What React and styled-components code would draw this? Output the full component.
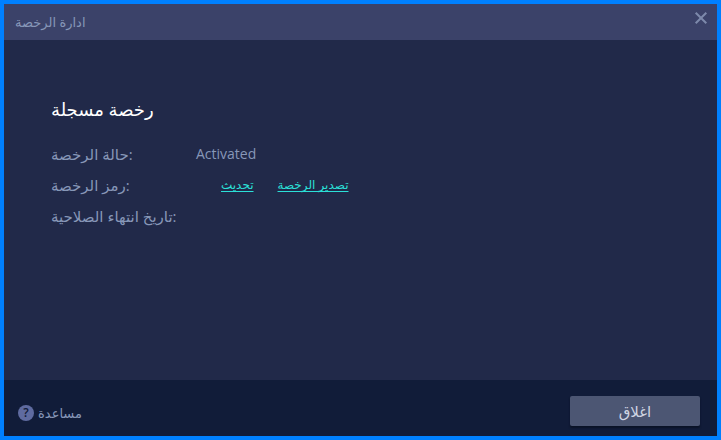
import React from 'react'
import styled, { createGlobalStyle } from 'styled-components'

const GlobalStyle = createGlobalStyle`
  body {
    margin: 0;
    background: #212949;
    font-family: 'Open Sans', 'DejaVu Sans', sans-serif;
  }
`

const Window = styled.div`
  box-sizing: border-box;
  display: flex;
  flex-direction: column;
  min-height: 100vh;
  border: 4px solid #0080ff;
  background: #212949;
  color: #8797b8;
`

const TitleBar = styled.header`
  display: flex;
  align-items: center;
  justify-content: space-between;
  height: 36px;
  padding: 0 8px 0 11px;
  background: #3b4269;
`

const Title = styled.h1`
  margin: 0;
  font-size: 13px;
  font-weight: 400;
  line-height: 20px;
`

const CloseIcon = styled.button`
  display: flex;
  margin: 0 0 8px;
  padding: 0;
  border: 0;
  background: none;
  color: #7d89ab;
  cursor: pointer;
`

const Content = styled.main`
  flex: 1;
  padding: 55px 47px 40px;
`

const Heading = styled.h2`
  margin: 0 0 15px;
  color: #ffffff;
  font-size: 18px;
  font-weight: 400;
  line-height: 28px;
`

const Details = styled.dl`
  display: grid;
  grid-template-columns: 145px 1fr;
  grid-auto-rows: 31px;
  align-items: center;
  margin: 0;
  font-size: 15px;
  line-height: 20px;
`

const Label = styled.dt`
  white-space: nowrap;
`

const Value = styled.dd`
  display: flex;
  gap: 24px;
  margin: 0;
  padding-left: ${props => (props.$indent ? '25px' : '0')};
  font-size: 14px;
`

const Link = styled.a`
  color: #2be0d8;
  font-size: 12px;
  text-underline-offset: 2px;
  text-decoration-skip-ink: none;
`

const Footer = styled.footer`
  display: flex;
  align-items: center;
  justify-content: space-between;
  height: 56px;
  padding: 0 17px 0 14px;
  background: #111c39;
`

const Help = styled.a`
  display: flex;
  align-items: center;
  gap: 4px;
  padding-top: 10px;
  color: inherit;
  font-size: 13px;
  line-height: 20px;
  text-decoration: none;
`

const HelpMark = styled.span`
  width: 16px;
  height: 16px;
  border-radius: 50%;
  background: #5f6ba0;
  color: #111c39;
  font-size: 12px;
  font-weight: 600;
  line-height: 16px;
  text-align: center;
`

const CloseButton = styled.button`
  width: 130px;
  height: 30px;
  margin-top: 6px;
  padding: 0;
  border: 0;
  border-radius: 2px;
  background: #4c5673;
  box-shadow: 0 2px 2px #0a1226;
  color: #d0d5e2;
  font-family: inherit;
  font-size: 15px;
  cursor: pointer;
`

const App = () => (
  <Window>
    <GlobalStyle />
    <TitleBar>
      <Title>ادارة الرخصة</Title>
      <CloseIcon type="button" aria-label="اغلاق">
        <svg width="16" height="16" viewBox="0 0 16 16" fill="none">
          <path d="M2.7 2.7l10.6 10.6M13.3 2.7L2.7 13.3" stroke="currentColor" strokeWidth="2" />
        </svg>
      </CloseIcon>
    </TitleBar>

    <Content>
      <Heading>رخصة مسجلة</Heading>
      <Details>
        <Label>حالة الرخصة:</Label>
        <Value>Activated</Value>
        <Label>رمز الرخصة:</Label>
        <Value $indent>
          <Link href="#update">تحديث</Link>
          <Link href="#export">تصدير الرخصة</Link>
        </Value>
        <Label>تاريخ انتهاء الصلاحية:</Label>
        <Value />
      </Details>
    </Content>

    <Footer>
      <Help href="#help">
        <HelpMark aria-hidden="true">?</HelpMark>
        مساعدة
      </Help>
      <CloseButton type="button">اغلاق</CloseButton>
    </Footer>
  </Window>
)

export default App
